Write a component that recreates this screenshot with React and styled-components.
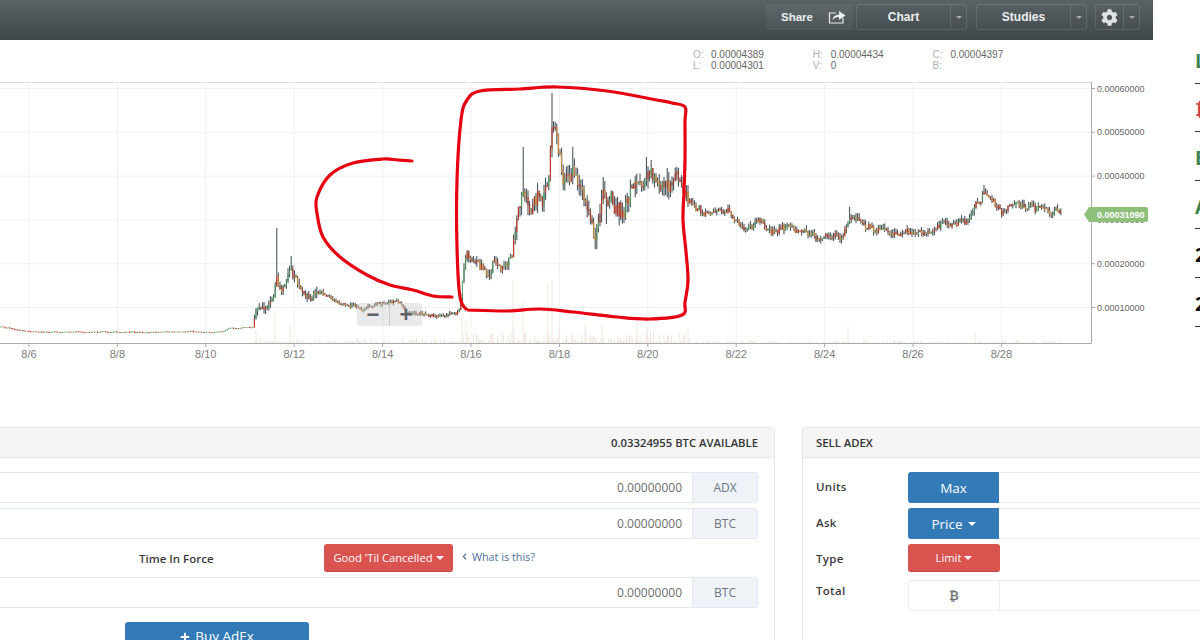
import React, { useMemo } from 'react'
import styled, { createGlobalStyle } from 'styled-components'
import { FaChevronLeft, FaCog, FaPlus } from 'react-icons/fa'

const GlobalStyle = createGlobalStyle`
    html, body {
        margin: 0;
        padding: 0;
        background: #fff;
        overflow: hidden;
    }
`

const Page = styled.div`
    width: 1200px;
    height: 640px;
    overflow: hidden;
    font-family: "Open Sans", "Liberation Sans", sans-serif;
`

const TopArea = styled.div`
    display: flex;
`

const ChartColumn = styled.div`
    width: 1153px;
    flex: none;
`

const Toolbar = styled.div`
    height: 40px;
    display: flex;
    justify-content: flex-end;
    align-items: flex-start;
    padding: 4px 13px 0 0;
    box-sizing: border-box;
    background: linear-gradient(#5a6266, #3e4649);
    font-family: "Liberation Sans", Arial, sans-serif;
`

const ShareButton = styled.div`
    width: 87px;
    height: 26px;
    margin-right: 3px;
    display: flex;
    align-items: center;
    justify-content: flex-end;
    gap: 15px;
    padding-right: 7px;
    box-sizing: border-box;
    border-radius: 3px;
    background: rgba(255, 255, 255, 0.05);
    color: #eceeee;
    font-size: 11.5px;
    font-weight: 700;
`

const SplitButton = styled.div`
    width: ${(p) => p.$width}px;
    height: 26px;
    margin-left: ${(p) => p.$gap}px;
    display: flex;
    box-sizing: border-box;
    border: 1px solid rgba(255, 255, 255, 0.13);
    border-radius: 3px;
    color: #eceeee;
    font-size: 12px;
    font-weight: 700;
`

const SplitLabel = styled.div`
    flex: 1;
    display: flex;
    align-items: center;
    justify-content: center;
`

const SplitArrow = styled.div`
    width: 15px;
    display: flex;
    align-items: center;
    justify-content: center;
    border-left: 1px solid rgba(255, 255, 255, 0.13);
    &::after {
        content: '';
        border-left: 3px solid transparent;
        border-right: 3px solid transparent;
        border-top: 3px solid #a4aaad;
    }
`

const QuoteStrip = styled.div`
    height: 42px;
    display: flex;
    padding: 9px 0 0 693px;
    box-sizing: border-box;
    font-family: "Liberation Sans", Arial, sans-serif;
    font-size: 10px;
    line-height: 11px;
`

const QuoteColumn = styled.div`
    width: 119.7px;
    display: grid;
    grid-template-columns: 18px 1fr;
    align-content: start;
`

const QuoteLabel = styled.span`
    color: #b0b0b0;
`

const QuoteValue = styled.span`
    color: #666;
`

const ChartFrame = styled.div`
    position: relative;
    height: 345px;
`

const ChartSvg = styled.svg`
    display: block;
`

const ZoomControl = styled.div`
    position: absolute;
    left: 357px;
    top: 221px;
    width: 65px;
    height: 23px;
    display: flex;
    align-items: center;
    border-radius: 3px;
    background: rgba(205, 205, 205, 0.42);
`

const ZoomSign = styled.div`
    flex: 1;
    text-align: center;
    color: #5d6468;
    font-family: "Liberation Sans", Arial, sans-serif;
    font-size: 22px;
    font-weight: 700;
    line-height: 23px;
    & + & {
        border-left: 1px solid rgba(170, 170, 170, 0.5);
    }
`

const SideStats = styled.div`
    flex: 1;
    padding: 35px 0 0 42px;
    overflow: hidden;
`

const Stat = styled.div`
    height: 48.6px;
    box-sizing: border-box;
    display: flex;
    align-items: center;
    padding-top: 4px;
    border-bottom: 1px solid #333;
    font-size: 19px;
    font-weight: 700;
    color: ${(p) => p.$color};
    font-family: "Open Sans", "DejaVu Sans", sans-serif;
`

const Panels = styled.div`
    display: flex;
    margin-left: -10px;
`

const Panel = styled.div`
    width: ${(p) => p.$width}px;
    flex: none;
    margin-right: ${(p) => p.$gap || 0}px;
    height: 260px;
    box-sizing: border-box;
    border: 1px solid #e6e6e6;
    border-radius: 3px;
`

const PanelHeader = styled.div`
    height: 29px;
    display: flex;
    align-items: center;
    justify-content: ${(p) => (p.$right ? 'flex-end' : 'flex-start')};
    padding: 0 16px 0 13px;
    background: #f5f5f5;
    border-bottom: 1px solid #e4e4e4;
    color: #333;
    font-size: 11.3px;
    font-weight: 600;
`

const BuyBody = styled.div`
    display: flex;
    flex-direction: column;
    gap: 5px;
    padding: 14px 16px 0 0;
`

const SellBody = styled.div`
    display: grid;
    grid-template-columns: 92px 1fr;
    grid-auto-rows: 31px;
    row-gap: 5px;
    padding: 14px 0 0 13px;
`

const InputGroup = styled.div`
    height: 31px;
    display: flex;
    box-sizing: border-box;
    border: 1px solid #e1e8f0;
    border-radius: 3px;
    overflow: hidden;
`

const Amount = styled.input`
    flex: 1;
    min-width: 0;
    border: 0;
    outline: 0;
    padding: 0 10px;
    text-align: right;
    font-family: inherit;
    font-size: 12px;
    color: #6d6d6d;
    background: #fff;
`

const Addon = styled.div`
    width: 64px;
    display: flex;
    align-items: center;
    justify-content: center;
    background: #eff3f8;
    border-left: 1px solid #e1e8f0;
    color: #6c7680;
    font-size: 12px;
`

const ForceRow = styled.div`
    height: 28px;
    display: flex;
    align-items: center;
    padding-left: 148px;
`

const ForceLabel = styled.div`
    width: 185px;
    color: #3b3b3b;
    font-size: 11.5px;
    font-weight: 600;
`

const RedButton = styled.div`
    width: ${(p) => p.$width};
    height: 28px;
    display: flex;
    align-items: center;
    justify-content: center;
    gap: 3px;
    box-sizing: border-box;
    border-radius: 3px;
    background: #d9534f;
    border-bottom: 1px solid #c9433f;
    color: #fff;
    font-size: 11.2px;
`

const Caret = styled.span`
    border-left: 4px solid transparent;
    border-right: 4px solid transparent;
    border-top: 4px solid #fff;
    margin-top: 1px;
`

const HelpLink = styled.div`
    display: flex;
    align-items: center;
    gap: 4px;
    margin: -3px 0 0 8px;
    color: #4a6f9c;
    font-size: 10.8px;
`

const BuyButton = styled.div`
    width: 184px;
    height: 36px;
    margin: 9px 0 0 134px;
    padding-top: 5px;
    display: flex;
    align-items: flex-start;
    justify-content: center;
    gap: 5px;
    box-sizing: border-box;
    border-radius: 3px;
    background: #337ab7;
    color: #fff;
    font-size: 13.5px;
    svg {
        margin-top: 5px;
    }
`

const SellLabel = styled.div`
    display: flex;
    align-items: center;
    color: #3b3b3b;
    font-size: 11.5px;
    font-weight: 600;
    letter-spacing: 0.3px;
    padding-bottom: ${(p) => p.$lift || 2}px;
`

const SellGroup = styled.div`
    display: flex;
    box-sizing: border-box;
    height: 31px;
    border: ${(p) => (p.$plain ? 0 : '1px solid #e8edf2')};
    border-radius: 3px;
`

const BlueButton = styled.div`
    width: 91px;
    flex: none;
    margin: -1px 0 -1px -1px;
    display: flex;
    align-items: center;
    justify-content: center;
    gap: 5px;
    border-radius: 3px 0 0 3px;
    background: #337ab7;
    color: #fff;
    font-size: 13.5px;
`

const CoinAddon = styled.div`
    width: 90px;
    flex: none;
    display: flex;
    align-items: center;
    justify-content: center;
    border-right: 1px solid #e8edf2;
    color: #777;
    font-size: 12px;
    font-weight: 700;
    font-family: "DejaVu Sans", sans-serif;
`

// chart geometry taken from the screenshot
const plot = { top: 0, bottom: 261, right: 1091 }
const xLabels = ['8/6', '8/8', '8/10', '8/12', '8/14', '8/16', '8/18', '8/20', '8/22', '8/24', '8/26', '8/28']
const yLabels = ['0.00060000', '0.00050000', '0.00040000', '0.00030000', '0.00020000', '0.00010000']

const pricePath = [
    [0, 327], [30, 332], [120, 332], [223, 332], [227, 329], [253, 327], [257, 310], [273, 305], [276, 275], [281, 292],
    [291, 268], [300, 285], [310, 300], [315, 290], [343, 304], [370, 306], [390, 300], [400, 301], [407, 312], [433, 316],
    [460, 310], [463, 275], [467, 258], [487, 272], [495, 262], [500, 266], [512, 258], [515, 225], [523, 175], [525, 190],
    [532, 200], [537, 180], [542, 190], [548, 170], [552, 115], [557, 135], [563, 175], [573, 165], [583, 190], [590, 205],
    [595, 235], [603, 192], [607, 205], [627, 214], [638, 195], [642, 190], [647, 175], [657, 185], [668, 177], [683, 190],
    [697, 207], [705, 214], [715, 208], [730, 214], [747, 226], [760, 222], [777, 231], [787, 228], [807, 232], [823, 238],
    [843, 237], [850, 217], [870, 228], [900, 235], [930, 234], [940, 224], [953, 228], [960, 220], [968, 222], [984, 195],
    [1003, 214], [1018, 205], [1033, 211], [1047, 210], [1053, 216], [1062, 213],
]

const spikes = [[276, 228], [291, 256], [463, 293], [523, 147], [552, 93], [573, 147], [603, 177], [647, 157], [668, 168], [850, 207], [984, 185]]
const dips = [[595, 249], [563, 190], [583, 200], [607, 224]]
const volumeSpikes = [[256, 13], [275, 33], [290, 18], [462, 30], [466, 22], [513, 63], [523, 42], [548, 60], [552, 63], [585, 20], [602, 18], [637, 22], [647, 15], [848, 18], [975, 10]]

// the two hand drawn marks, in plot coordinates
const curveMark = [[412, 79], [398, 78], [383, 77], [353, 81], [330, 93], [317, 115], [317, 131], [323, 155], [340, 175], [367, 193], [390, 203], [413, 208], [433, 214], [452, 215]]
const boxMark = [[467, 228], [460, 215], [457, 165], [457, 98], [461, 38], [467, 18], [480, 9], [520, 7], [557, 5], [607, 9], [657, 18], [672, 21], [685, 25], [685, 40], [685, 78], [684, 110], [683, 138], [686, 170], [688, 198], [685, 220], [682, 233], [650, 237], [617, 235], [573, 230], [540, 227], [507, 229], [467, 228]]

function smoothLine(points) {
    let d = `M${points[0][0]} ${points[0][1]}`
    for (let i = 0; i < points.length - 1; i++) {
        const p0 = points[i - 1] || points[i]
        const p1 = points[i]
        const p2 = points[i + 1]
        const p3 = points[i + 2] || p2
        d += `C${p1[0] + (p2[0] - p0[0]) / 6} ${p1[1] + (p2[1] - p0[1]) / 6} ${p2[0] - (p3[0] - p1[0]) / 6} ${p2[1] - (p3[1] - p1[1]) / 6} ${p2[0]} ${p2[1]}`
    }
    return d
}

function priceAt(x) {
    for (let i = 1; i < pricePath.length; i++) {
        if (x <= pricePath[i][0]) {
            const [x0, y0] = pricePath[i - 1]
            const [x1, y1] = pricePath[i]
            return y0 + ((y1 - y0) * (x - x0)) / (x1 - x0)
        }
    }
    return 213
}

function swingAt(x) {
    if (x < 253) return 0.9
    if (x < 320) return 8
    if (x < 462) return 3.5
    if (x < 515) return 8
    if (x < 690) return 15
    return 6
}

function extremeAt(list, x) {
    const hit = list.find(([at]) => Math.abs(at - x) <= 0.8)
    return hit ? hit[1] - 82 : null
}

function buildChart() {
    let seed = 4711
    const rand = () => {
        seed = (seed * 1664525 + 1013904223) % 4294967296
        return seed / 4294967296
    }
    const wicks = []
    const up = []
    const down = []
    const warm = []
    let prev = priceAt(0) - 82
    let drift = 0
    for (let x = 0; x <= 1062; x += 1.6) {
        const swing = swingAt(x)
        drift = drift * 0.8 + (rand() - 0.5) * swing * 0.9
        const close = priceAt(x) - 82 + drift + (rand() - 0.5) * swing * 0.7
        const px = x.toFixed(1)
        const wickTop = extremeAt(spikes, x) ?? Math.min(prev, close) - rand() * swing * 0.7
        const wickBottom = extremeAt(dips, x) ?? Math.max(prev, close) + rand() * swing * 0.7
        if (swing > 1) wicks.push(`M${px} ${wickTop.toFixed(1)}V${wickBottom.toFixed(1)}`)
        const body = `M${px} ${Math.min(prev, close).toFixed(1)}V${(Math.max(prev, close) + 0.8).toFixed(1)}`
        if (close > prev) {
            if (swing > 3 && rand() > 0.45) warm.push(body)
            else down.push(body)
        } else if (swing > 3 && rand() > 0.5) down.push(body)
        else up.push(body)
        prev = close
    }
    const volume = []
    for (let x = 253; x <= 1062; x += 1.5) {
        const level = x < 462 ? 4 : x < 690 ? 13 : 3
        volume.push(`M${x} ${plot.bottom}v${(-rand() * rand() * level * 1.4).toFixed(1)}`)
    }
    volumeSpikes.forEach(([x, h]) => volume.push(`M${x} ${plot.bottom}v${-h}`))
    return { wicks: wicks.join(''), up: up.join(''), down: down.join(''), warm: warm.join(''), volume: volume.join('') }
}

function PriceChart() {
    const chart = useMemo(buildChart, [])
    return (
        <ChartSvg width="1153" height="290" viewBox="0 0 1153 290">
            <line x1="0" x2={plot.right} y1="0.5" y2="0.5" stroke="#dcdcdc" />
            {yLabels.map((label, i) => (
                <g key={label}>
                    <line x1="0" x2={plot.right} y1={6.5 + i * 43.8} y2={6.5 + i * 43.8} stroke="#f0f0f0" />
                    <line x1={plot.right} x2={plot.right + 4} y1={6.5 + i * 43.8} y2={6.5 + i * 43.8} stroke="#aaa" />
                    <text x="1097" y={9.5 + i * 43.8} fontFamily="Liberation Sans" fontSize="9" fill="#666">{label}</text>
                </g>
            ))}
            {xLabels.map((label, i) => (
                <g key={label}>
                    <line x1={29 + i * 88.4} x2={29 + i * 88.4} y1="0" y2={plot.bottom} stroke="#f0f0f0" />
                    <line x1={29 + i * 88.4} x2={29 + i * 88.4} y1={plot.bottom} y2={plot.bottom + 4} stroke="#aaa" />
                    <text x={29 + i * 88.4} y="276" textAnchor="middle" fontFamily="Liberation Sans" fontSize="11" fill="#7c7c7c">{label}</text>
                </g>
            ))}
            <path d={chart.volume} stroke="#eee6dd" strokeWidth="1" fill="none" />
            <line x1="0" x2={plot.right + 0.5} y1={plot.bottom + 0.5} y2={plot.bottom + 0.5} stroke="#aaa" />
            <line x1={plot.right + 0.5} x2={plot.right + 0.5} y1="0" y2={plot.bottom + 0.5} stroke="#aaa" />
            <path d={chart.wicks} stroke="#25333b" strokeWidth="0.9" fill="none" />
            <path d={chart.up} stroke="#4d9a5c" strokeWidth="1" fill="none" />
            <path d={chart.down} stroke="#c23a22" strokeWidth="1.1" fill="none" />
            <path d={chart.warm} stroke="#c9853a" strokeWidth="1.3" fill="none" />
            <path d="M1084 132.5 L1089 125 H1146 a2 2 0 0 1 2 2 V138 a2 2 0 0 1 -2 2 H1089 Z" fill="#8fc07a" />
            <text x="1097" y="136" fontFamily="Liberation Sans" fontSize="9" fontWeight="700" fill="#fff">0.00031090</text>
            <path d={smoothLine(curveMark)} stroke="#e60012" strokeWidth="3.2" fill="none" strokeLinecap="round" />
            <path d={smoothLine(boxMark)} stroke="#e60012" strokeWidth="3.2" fill="none" strokeLinejoin="round" />
        </ChartSvg>
    )
}

function ShareIcon() {
    return (
        <svg width="18" height="14" viewBox="0 0 18 14">
            <path d="M8 3H1.5V13H15V8" stroke="#eceeee" strokeWidth="1.2" fill="none" />
            <path d="M4.5 10 C5 6.5 7.5 4.5 11 4.4 V1 L17.5 5.5 L11 10 V7 C8.5 7 6 8 4.5 10 Z" fill="#eceeee" />
        </svg>
    )
}

function Quote({ rows }) {
    return (
        <QuoteColumn>
            {rows.map(([label, value]) => (
                <React.Fragment key={label}>
                    <QuoteLabel>{label}</QuoteLabel>
                    <QuoteValue>{value}</QuoteValue>
                </React.Fragment>
            ))}
        </QuoteColumn>
    )
}

function AmountRow({ unit }) {
    return (
        <InputGroup>
            <Amount readOnly value="0.00000000" />
            <Addon>{unit}</Addon>
        </InputGroup>
    )
}

export default function App() {
    return (
        <Page>
            <GlobalStyle />
            <TopArea>
                <ChartColumn>
                    <Toolbar>
                        <ShareButton>Share <ShareIcon /></ShareButton>
                        <SplitButton $width={111} $gap={0}>
                            <SplitLabel>Chart</SplitLabel>
                            <SplitArrow />
                        </SplitButton>
                        <SplitButton $width={111} $gap={9}>
                            <SplitLabel>Studies</SplitLabel>
                            <SplitArrow />
                        </SplitButton>
                        <SplitButton $width={45} $gap={8}>
                            <SplitLabel><FaCog size={17} color="#dfe2e3" /></SplitLabel>
                            <SplitArrow />
                        </SplitButton>
                    </Toolbar>
                    <QuoteStrip>
                        <Quote rows={[['O:', '0.00004389'], ['L:', '0.00004301']]} />
                        <Quote rows={[['H:', '0.00004434'], ['V:', '0']]} />
                        <Quote rows={[['C:', '0.00004397'], ['B:', '']]} />
                    </QuoteStrip>
                    <ChartFrame>
                        <PriceChart />
                        <ZoomControl>
                            <ZoomSign>−</ZoomSign>
                            <ZoomSign>+</ZoomSign>
                        </ZoomControl>
                    </ChartFrame>
                </ChartColumn>
                <SideStats>
                    <Stat $color="#3c8350">L</Stat>
                    <Stat $color="#c9444e">₿</Stat>
                    <Stat $color="#3c8350">E</Stat>
                    <Stat $color="#3c8350">A</Stat>
                    <Stat $color="#111">2</Stat>
                    <Stat $color="#111">2</Stat>
                </SideStats>
            </TopArea>
            <Panels>
                <Panel $width={785} $gap={27}>
                    <PanelHeader $right>0.03324955 BTC AVAILABLE</PanelHeader>
                    <BuyBody>
                        <AmountRow unit="ADX" />
                        <AmountRow unit="BTC" />
                        <ForceRow>
                            <ForceLabel>Time In Force</ForceLabel>
                            <RedButton $width="129px">Good 'Til Cancelled <Caret /></RedButton>
                            <HelpLink><FaChevronLeft size={7} /> What is this?</HelpLink>
                        </ForceRow>
                        <AmountRow unit="BTC" />
                        <BuyButton><FaPlus size={10} /> Buy AdEx</BuyButton>
                    </BuyBody>
                </Panel>
                <Panel $width={430}>
                    <PanelHeader>SELL ADEX</PanelHeader>
                    <SellBody>
                        <SellLabel>Units</SellLabel>
                        <SellGroup><BlueButton>Max</BlueButton></SellGroup>
                        <SellLabel>Ask</SellLabel>
                        <SellGroup><BlueButton>Price <Caret /></BlueButton></SellGroup>
                        <SellLabel>Type</SellLabel>
                        <SellGroup $plain><RedButton $width="92px">Limit <Caret /></RedButton></SellGroup>
                        <SellLabel $lift={10}>Total</SellLabel>
                        <SellGroup><CoinAddon>₿</CoinAddon></SellGroup>
                    </SellBody>
                </Panel>
            </Panels>
        </Page>
    )
}
